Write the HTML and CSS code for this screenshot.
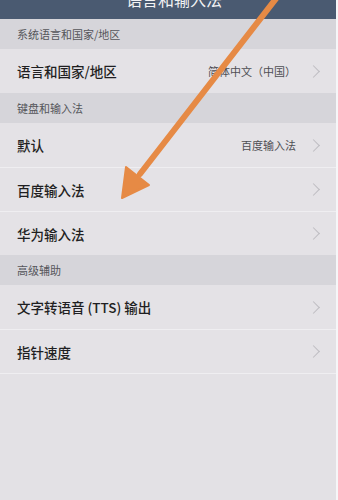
FILE: index.html
```html
<!DOCTYPE html>
<html lang="zh">
<head>
<meta charset="utf-8">
<link rel="stylesheet" href="styles.css">
</head>
<body>
<div class="page">
  <header class="topbar"><div class="title">语言和输入法</div></header>
  <div class="section">系统语言和国家/地区</div>
  <div class="row first"><span class="label">语言和国家/地区</span><span class="value">简体中文（中国）</span><span class="chev"></span></div>
  <div class="section">键盘和输入法</div>
  <div class="row first"><span class="label">默认</span><span class="value">百度输入法</span><span class="chev"></span></div>
  <div class="row"><span class="label">百度输入法</span><span class="chev"></span></div>
  <div class="row"><span class="label">华为输入法</span><span class="chev"></span></div>
  <div class="section">高级辅助</div>
  <div class="row first"><span class="label">文字转语音 (TTS) 输出</span><span class="chev"></span></div>
  <div class="row last"><span class="label">指针速度</span><span class="chev"></span></div>
  <svg class="arrow" width="338" height="500" viewBox="0 0 338 500">
    <line x1="278" y1="-4" x2="140" y2="174" stroke="#e68a45" stroke-width="6" stroke-linecap="round"/>
    <polygon points="122,198 126,167 149,185" fill="#e68a45" stroke="#e68a45" stroke-width="2" stroke-linejoin="round"/>
  </svg>
</div>
</body>
</html>
```
FILE: styles.css
```css
html, body {
  margin: 0;
  padding: 0;
  background: #f6f6f8;
}
body {
  font-family: "Noto Sans CJK SC", "Noto Sans", sans-serif;
}
.page {
  position: relative;
  width: 336px;
  height: 500px;
  background: #e3e1e5;
  overflow: hidden;
}
.topbar {
  height: 19px;
  background: #4a5a71;
  overflow: hidden;
  display: flex;
  justify-content: center;
}
.title {
  color: #f2f2f4;
  font-size: 16px;
  line-height: 20px;
  margin-top: -11px;
  padding-left: 12px;
}
.section {
  height: 30px;
  background: #d6d5da;
  color: #55555a;
  font-size: 11px;
  line-height: 30px;
  padding-left: 17px;
}
.row {
  height: 44px;
  display: flex;
  align-items: center;
  padding-left: 17px;
  padding-right: 16px;
  background: #e4e2e6;
  border-top: 1px solid #efeef1;
  box-sizing: border-box;
}
.row.first {
  border-top: none;
}
.row.last {
  border-bottom: 1px solid #efeef1;
  height: 45px;
}
.label {
  flex: 1;
  font-size: 13.5px;
  font-weight: 500;
  color: #1f1f22;
}
.value {
  font-size: 11px;
  color: #4f4f54;
  margin-right: 13px;
}
.chev {
  width: 8px;
  height: 8px;
  border-top: 1px solid #bdbcc1;
  border-right: 1px solid #bdbcc1;
  transform: rotate(45deg);
  margin-right: 2px;
}
.arrow {
  position: absolute;
  left: 0;
  top: 0;
}
```
